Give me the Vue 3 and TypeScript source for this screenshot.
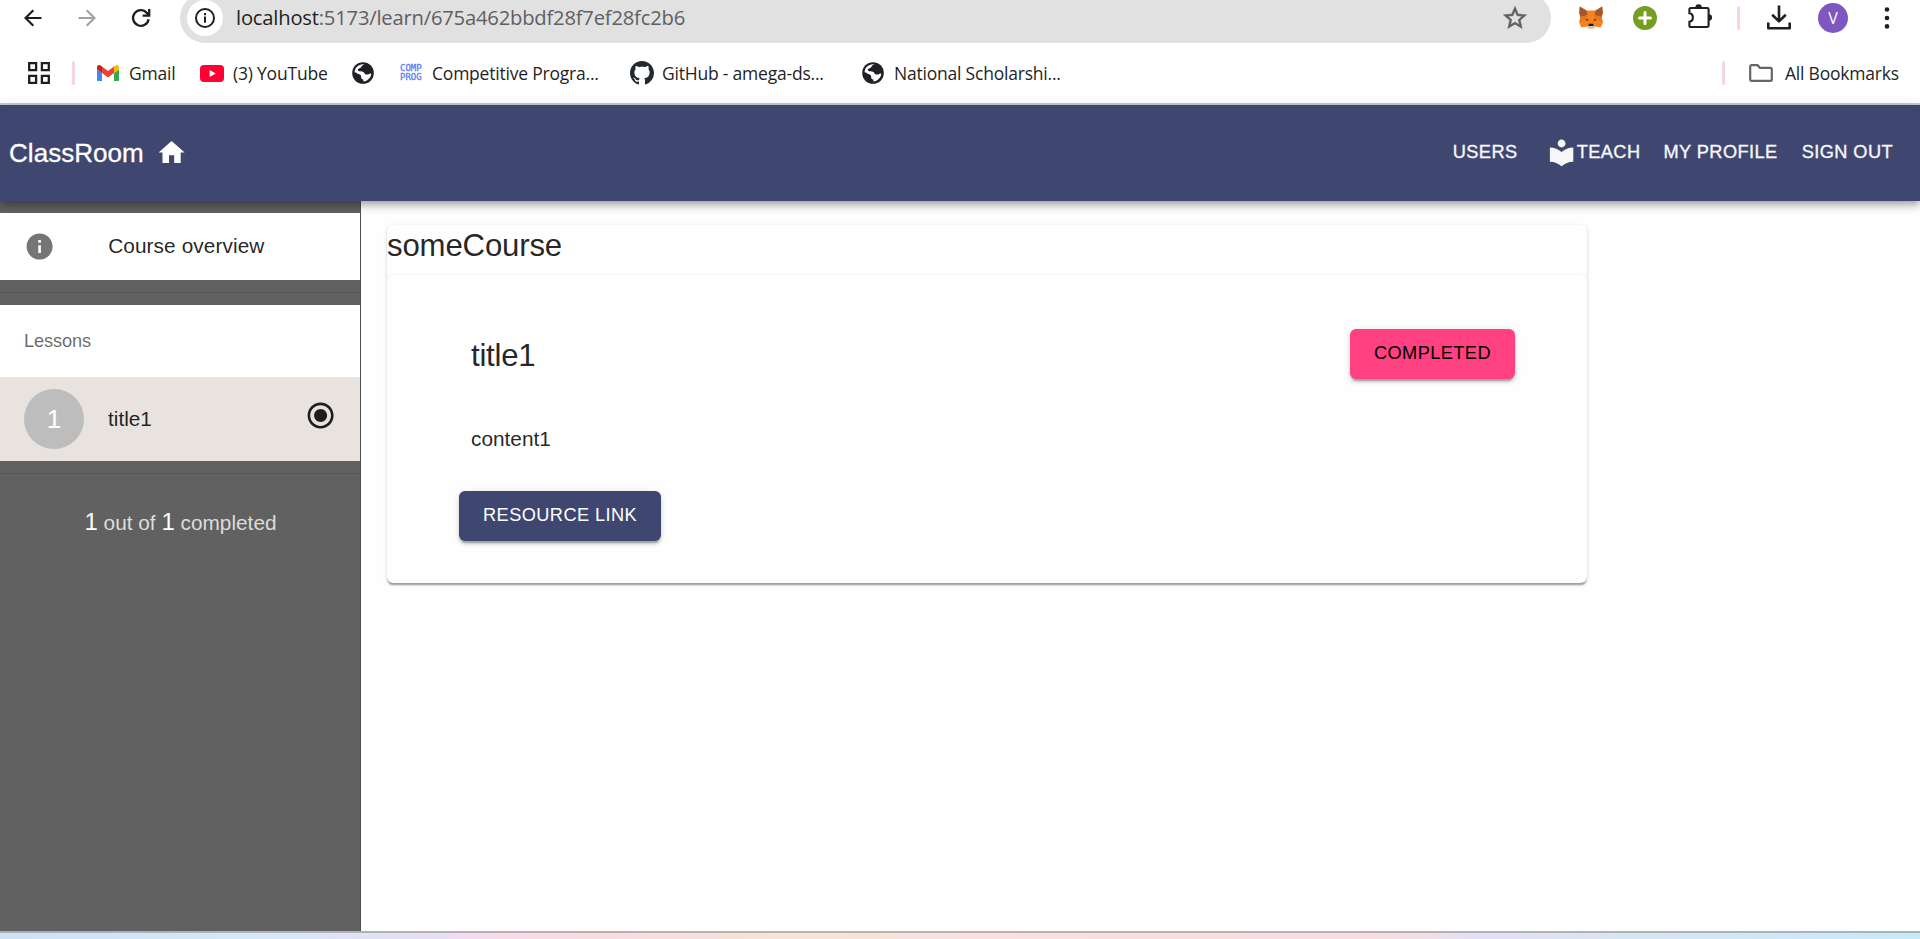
<script setup lang="ts">
import { ref, computed } from 'vue'

interface Lesson {
  title: string
  content: string
  done: boolean
}

const courseName = ref('someCourse')
const lessons = ref<Lesson[]>([{ title: 'title1', content: 'content1', done: true }])
const current = ref(0)
const active = computed(() => lessons.value[current.value])
const completed = computed(() => lessons.value.filter((l) => l.done).length)
</script>

<template>
  <div class="screen">
    <header class="browser">
      <div class="toolbar">
        <svg class="ic back" viewBox="0 0 18 18" width="18" height="18"><path d="M17.5 9H1.8M9.3 1.2 1.5 9l7.8 7.8" fill="none" stroke="#1f1f1f" stroke-width="2.2" /></svg>
        <svg class="ic forward" viewBox="0 0 18 18" width="18" height="18"><path d="M.5 9h15.7M8.7 1.2 16.5 9l-7.8 7.8" fill="none" stroke="#a3a3a3" stroke-width="2.2" /></svg>
        <svg class="ic reload" viewBox="0 0 20 20" width="20" height="20"><path d="M17.6 11.2A7.8 7.8 0 1 1 15.8 4.9L18 7M18.2 1v6.6h-6.6" fill="none" stroke="#1f1f1f" stroke-width="2.3" /></svg>
        <div class="omnibox">
          <span class="site">
            <svg viewBox="0 0 22 22" width="22" height="22"><circle cx="11" cy="11" r="9" fill="none" stroke="#1f1f1f" stroke-width="2" /><path d="M11 9.6v6.2M11 6v2.2" stroke="#1f1f1f" stroke-width="2" /></svg>
          </span>
          <span class="url"><b>localhost</b>:5173/learn/675a462bbdf28f7ef28fc2b6</span>
          <svg class="star" viewBox="0 0 24 24" width="28" height="28"><path fill="#5f6062" stroke="#5f6062" stroke-width=".4" d="M22 9.24l-7.19-.62L12 2 9.19 8.63 2 9.24l5.46 4.73L5.82 21 12 17.27 18.18 21l-1.63-7.03L22 9.24zM12 15.4l-3.76 2.27 1-4.28-3.32-2.88 4.38-.38L12 6.1l1.71 4.04 4.38.38-3.32 2.88 1 4.28L12 15.4z" /></svg>
        </div>
        <svg class="ic fox" viewBox="0 0 24 23" width="24" height="23">
          <path d="M.8.5 7.400 4.400h9.200L23.2.5 24 7l-1.400 4.300L24 16l-2.200 5.600-5.300-1.200-2.200 2.100H9.700l-2.200-2.100-5.300 1.200L0 16l1.400-4.700L0 7z" fill="#f5841f" />
          <path d="M.8.5 7.400 4.400 8.600 9 1.400 11 .3 6.600zM23.2.5 16.600 4.400 15.400 9l7.200 2 1.100-4.400z" fill="#a5562a" />
          <path d="M1.400 11.300 8.600 9l-.4 3.400L1 16zM22.600 11.300 15.400 9l.4 3.400L23 16z" fill="#e9761c" />
          <path d="m5.800 14 3-1.200.7 2.200zM18.200 14l-3-1.200-.7 2.200z" fill="#4a3a3b" />
          <path d="m8 20.400 1.700-1.500h4.600l1.700 1.500-1.700 2.100H9.700z" fill="#d6c4b4" /><path d="M9.800 17.800h4.400l.5 2.200H9.300z" fill="#241d1c" />
        </svg>
        <svg class="ic plus" viewBox="0 0 24 24" width="24" height="24"><circle cx="12" cy="12" r="12" fill="#759e22" /><path d="M12 6.500v11M6.500 12h11" stroke="#fff" stroke-width="3" stroke-linecap="round" /></svg>
        <svg class="ic puzzle" viewBox="0 0 24 26" width="24" height="26"><path d="M3 5h16.2a1.4 1.4 0 0 1 1.4 1.4v16.2a1.4 1.4 0 0 1-1.4 1.4H2.6a1.2 1.2 0 0 1-1.2-1.2v-4.1c4.600-.4 4.600-8 0-8.4V6.400A1.4 1.4 0 0 1 3 5z" fill="none" stroke="#1f1f1f" stroke-width="2.1" /><path d="M7.4 4.4a3.2 3.2 0 0 1 6.4 0zM20.8 11.2a3.2 3.2 0 0 1 0 6.4z" fill="#1f1f1f" /></svg>
        <i class="rule toolrule"></i>
        <svg class="ic download" viewBox="0 0 24 25" width="24" height="25"><path d="M12 .5v15.6M5.2 9.8 12 16.4l6.8-6.6M1.3 17.5v5.7h21.4v-5.7" fill="none" stroke="#1f1f1f" stroke-width="2.6" stroke-linejoin="round" /></svg>
        <span class="profile">V</span>
        <svg class="ic dots" viewBox="0 0 6 24" width="6" height="24"><g fill="#1f1f1f"><circle cx="3" cy="3.5" r="2.3" /><circle cx="3" cy="12" r="2.3" /><circle cx="3" cy="20.4" r="2.3" /></g></svg>
      </div>

      <div class="bookmarks">
        <svg class="ic apps" viewBox="0 0 22 22" width="22" height="22"><path d="M1.2 1.2h6.9v6.9H1.2zM13.9 1.2h6.9v6.9h-6.9zM1.2 13.9h6.9v6.9H1.2zM13.9 13.9h6.9v6.9h-6.9z" fill="none" stroke="#1f1f1f" stroke-width="2.3" /></svg>
        <i class="rule bmrule"></i>
        <svg class="ic gmail" viewBox="52 42 88 66" width="22" height="16.5"><path fill="#4285f4" d="M58 108h14V74L52 59v43c0 3.32 2.69 6 6 6" /><path fill="#34a853" d="M120 108h14c3.32 0 6-2.69 6-6V59l-20 15" /><path fill="#fbbc04" d="M120 48v26l20-15v-8c0-7.42-8.47-11.65-14.4-7.2" /><path fill="#ea4335" d="M72 74V48l24 18 24-18v26L96 92" /><path fill="#c5221f" d="M52 51v8l20 15V48l-5.6-4.2c-5.94-4.45-14.4-.22-14.4 7.2" /></svg>
        <span class="bm t-gmail">Gmail</span>
        <svg class="ic youtube" viewBox="0 0 24 17" width="24" height="17"><rect width="24" height="17" rx="4" fill="#ff0033" /><path d="m9.6 4.9 6.2 3.6-6.2 3.6z" fill="#fff" /></svg>
        <span class="bm t-youtube">(3) YouTube</span>
        <svg class="ic globe1" viewBox="0 0 22 22" width="22" height="22"><circle cx="11" cy="11" r="10.8" fill="#1f2023" /><path d="M12.6 2.4c-3.2.6-2.6 2.2-4 3.3-1.500 1.100-2.800.6-2.800 2.400 0 1.500 2.200 1.300 4.200 1.400 2.300.1 2.100 2.400 3.900 2.900 1.400.4 2.300.2 3.200-.4.9-.6 1.900-.6 2.200-.6-.3 4-3.500 7.600-7.900 8.100v-2c-1.500.1-2.200-1-2.200-2.300 0-1.700-.9-2.600-2.600-3.100-1.500-.4-2.300-1.600-4-1.800C2.600 5.500 7 1.500 12.600 2.400z" fill="#fff" /><path d="M14 2.800c.9 1.400-.2 2.300-1.500 2.600-1 .3-.7 1.500.5 1.900 1 .3.8 1.700 2 2.100 1.500.4 3-.8 4.300-.5l.3 3 1.200-1-.5-4.500z" fill="#1f2023" /></svg>
        <span class="comp">COMP<br />PROG</span>
        <span class="bm t-comp">Competitive Progra...</span>
        <svg class="ic github" viewBox="0 0 16 16" width="24" height="24"><path fill="#24292f" d="M8 0C3.58 0 0 3.58 0 8c0 3.54 2.29 6.53 5.47 7.59.4.07.55-.17.55-.38 0-.19-.01-.82-.01-1.49-2.01.37-2.53-.49-2.69-.94-.09-.23-.48-.94-.82-1.13-.28-.15-.68-.52-.01-.53.63-.01 1.08.58 1.23.82.72 1.21 1.87.87 2.33.66.07-.52.28-.87.51-1.07-1.78-.2-3.64-.89-3.64-3.95 0-.87.31-1.59.82-2.15-.08-.2-.36-1.02.08-2.12 0 0 .67-.21 2.2.82.64-.18 1.32-.27 2-.27s1.36.09 2 .27c1.53-1.04 2.2-.82 2.2-.82.44 1.1.16 1.92.08 2.12.51.56.82 1.27.82 2.15 0 3.07-1.87 3.75-3.65 3.95.29.25.54.73.54 1.48 0 1.07-.01 1.93-.01 2.2 0 .21.15.46.55.38A8.01 8.01 0 0 0 16 8c0-4.42-3.58-8-8-8z" /></svg>
        <span class="bm t-github">GitHub - amega-ds...</span>
        <svg class="ic globe2" viewBox="0 0 22 22" width="22" height="22"><circle cx="11" cy="11" r="10.8" fill="#1f2023" /><path d="M12.6 2.4c-3.2.6-2.6 2.2-4 3.3-1.500 1.100-2.800.6-2.800 2.400 0 1.500 2.200 1.300 4.200 1.400 2.300.1 2.100 2.400 3.900 2.900 1.400.4 2.300.2 3.200-.4.9-.6 1.900-.6 2.200-.6-.3 4-3.500 7.600-7.900 8.100v-2c-1.500.1-2.200-1-2.200-2.300 0-1.700-.9-2.600-2.600-3.100-1.500-.4-2.300-1.600-4-1.800C2.600 5.500 7 1.500 12.600 2.400z" fill="#fff" /><path d="M14 2.800c.9 1.400-.2 2.300-1.500 2.600-1 .3-.7 1.500.5 1.900 1 .3.8 1.700 2 2.100 1.500.4 3-.8 4.300-.5l.3 3 1.200-1-.5-4.500z" fill="#1f2023" /></svg>
        <span class="bm t-national">National Scholarshi...</span>
        <div class="all">
          <i class="rule"></i>
          <svg class="ic folder" viewBox="0 0 24 18" width="24" height="18"><path d="M2.4 1.200h6.100l2.400 2.600h10.500a1.400 1.400 0 0 1 1.400 1.400v10.200a1.400 1.400 0 0 1-1.400 1.400h-19A1.400 1.400 0 0 1 1.200 15.400V2.500a1.300 1.300 0 0 1 1.200-1.300z" fill="none" stroke="#666" stroke-width="2.2" /></svg>
          <span class="bm t-all">All Bookmarks</span>
        </div>
      </div>
    </header>

    <nav class="appbar">
      <span class="brand">ClassRoom</span>
      <svg class="mi home" viewBox="0 0 24 24"><path d="M10 20v-6h4v6h5v-8h3L12 3 2 12h3v8z" /></svg>
      <div class="links">
        <a class="link users">USERS</a>
        <a class="link teach"><svg class="mi" viewBox="0 0 24 24"><path d="M12 11.550C9.640 9.350 6.480 8 3 8v11c3.480 0 6.640 1.350 9 3.550 2.360-2.190 5.520-3.550 9-3.550V8c-3.480 0-6.640 1.350-9 3.550zM12 8c1.660 0 3-1.340 3-3s-1.340-3-3-3-3 1.340-3 3 1.340 3 3 3z" /></svg>TEACH</a>
        <a class="link my">MY PROFILE</a>
        <a class="link">SIGN OUT</a>
      </div>
    </nav>

    <div class="body">
      <aside class="drawer">
        <div class="list">
          <div class="item overview">
            <svg class="mi info" viewBox="0 0 24 24"><path d="M12 2C6.480 2 2 6.480 2 12s4.480 10 10 10 10-4.480 10-10S17.520 2 12 2zm1 15h-2v-6h2v6zm0-8h-2V7h2v2z" /></svg>
            <span class="label">Course overview</span>
          </div>
        </div>
        <div class="list bordered">
          <div class="subheader">Lessons</div>
          <div v-for="(lesson, i) in lessons" :key="i" class="item lesson" @click="current = i">
            <span class="avatar">{{ i + 1 }}</span>
            <span class="name">{{ lesson.title }}</span>
            <svg class="mi state" viewBox="0 0 24 24"><path v-if="lesson.done" d="M12 7c-2.760 0-5 2.240-5 5s2.240 5 5 5 5-2.240 5-5-2.240-5-5-5zm0-5C6.480 2 2 6.480 2 12s4.480 10 10 10 10-4.480 10-10S17.520 2 12 2zm0 18c-4.420 0-8-3.580-8-8s3.580-8 8-8 8 3.580 8 8-3.580 8-8 8z" /><path v-else d="M12 2C6.480 2 2 6.480 2 12s4.480 10 10 10 10-4.480 10-10S17.520 2 12 2zm0 18c-4.420 0-8-3.580-8-8s3.580-8 8-8 8 3.580 8 8-3.580 8-8 8z" /></svg>
          </div>
        </div>
        <p class="progress"><em>{{ completed }}</em> out of <em>{{ lessons.length }}</em> completed</p>
      </aside>

      <main class="content">
        <section class="card">
          <h1 class="course">{{ courseName }}</h1>
          <article class="card inner">
            <div class="head">
              <h2>{{ active.title }}</h2>
              <button class="btn pink">COMPLETED</button>
            </div>
            <p class="text">{{ active.content }}</p>
            <button class="btn blue">RESOURCE LINK</button>
          </article>
        </section>
      </main>
    </div>

    <footer class="desktop"></footer>
  </div>
</template>

<style>
html,
body {
  margin: 0;
  overflow: hidden;
}
</style>

<style scoped>
.screen {
  width: 1920px;
  height: 939px;
  display: flex;
  flex-direction: column;
  overflow: hidden;
  background: #fefefe;
  color: rgba(0, 0, 0, 0.87);
  font-family: 'Liberation Sans', Arial, sans-serif;
  font-size: 20.8px;
}
.ic,
.mi {
  display: block;
  flex: none;
}
.mi {
  width: 31.2px;
  height: 31.2px;
  fill: currentColor;
}

/* browser chrome */
.browser {
  flex: none;
  height: 103px;
  overflow: hidden;
  border-bottom: 2px solid #c9c9cb;
  background: #fff;
  color: #1f1f1f;
  font-family: 'Open Sans', 'Noto Sans', sans-serif;
}
.toolbar {
  display: flex;
  align-items: center;
  height: 35px;
}
.back { margin-left: 24px; }
.forward { margin-left: 36px; }
.reload { margin-left: 35px; }
.omnibox {
  flex: none;
  display: flex;
  align-items: center;
  box-sizing: border-box;
  width: 1371px;
  height: 50px;
  margin-left: 29px;
  padding: 0 22px 0 7px;
  border-radius: 25px;
  background: #e1e1e1;
}
.site {
  display: flex;
  align-items: center;
  justify-content: center;
  width: 36px;
  height: 36px;
  border-radius: 50%;
  background: #fff;
}
.url {
  margin-left: 13px;
  padding-bottom: 2px;
  color: #5f6062;
  font-size: 20.2px;
  letter-spacing: -0.2px;
  white-space: nowrap;
}
.url b {
  color: #1f1f1f;
  font-weight: 400;
}
.star { margin-left: auto; }
.fox { margin-left: 28px; }
.plus { margin-left: 30px; }
.puzzle { margin: -3px 0 0 31px; }
.rule {
  flex: none;
  width: 3px;
  height: 24px;
  border-radius: 2px;
  background: #f8d5e4;
}
.toolrule { margin-left: 25px; }
.download { margin-left: 27px; }
.profile {
  width: 30px;
  height: 30px;
  margin-left: 27px;
  border-radius: 50%;
  background: #7e57c2;
  color: #fff;
  font-size: 16px;
  line-height: 30px;
  text-align: center;
}
.dots { margin-left: 36px; }
.bookmarks {
  display: flex;
  align-items: center;
  height: 60px;
  margin-top: 8px;
}
.bm {
  flex: none;
  padding-bottom: 1px;
  font-size: 17.5px;
  letter-spacing: -0.21px;
  line-height: 24px;
  white-space: nowrap;
}
.apps { margin-left: 28px; }
.bmrule { margin-left: 22px; }
.gmail { margin-left: 22px; }
.t-gmail { width: 61px; margin-left: 10px; }
.youtube { margin-left: 10px; }
.t-youtube { width: 108px; margin-left: 9px; }
.globe1 { margin-left: 11px; }
.comp {
  width: 22px;
  margin-left: 26px;
  color: #5b7cf5;
  font-family: 'DejaVu Sans Mono', monospace;
  font-size: 9px;
  line-height: 9px;
  -webkit-text-stroke: 0.3px #5b7cf5;
}
.t-comp { width: 188px; margin-left: 10px; }
.github { margin-left: 10px; }
.t-github { width: 190px; margin-left: 8px; }
.globe2 { margin-left: 10px; }
.t-national { margin-left: 10px; }
.all {
  display: flex;
  align-items: center;
  width: 198px;
  margin-left: auto;
}
.folder { margin-left: 24px; }
.t-all { margin-left: 12px; }

/* application bar */
.appbar {
  position: relative;
  z-index: 2;
  flex: none;
  display: flex;
  align-items: center;
  box-sizing: border-box;
  height: 96px;
  padding: 0 15px 0 9px;
  background: #3f4771;
  color: #fff;
  box-shadow: 0 3px 6px -1.5px rgba(0, 0, 0, 0.2), 0 6px 7.5px 0 rgba(0, 0, 0, 0.14), 0 1.5px 15px 0 rgba(0, 0, 0, 0.12);
}
.brand {
  font-size: 26px;
  letter-spacing: 0.05px;
  -webkit-text-stroke: 0.3px currentColor;
}
.home { margin-left: 12px; }
.links {
  display: flex;
  margin-left: auto;
}
.link {
  display: flex;
  align-items: center;
  padding: 0 12px;
  font-size: 18.2px;
  letter-spacing: 0.43px;
  line-height: 31.85px;
  color: #f7f7fa;
  -webkit-text-stroke: 0.35px currentColor;
}
.users { margin-right: 4px; }
.teach { margin-right: -1px; }

/* lesson drawer */
.body {
  flex: 1;
  display: flex;
  min-height: 0;
}
.drawer {
  width: 360px;
  flex: none;
  border-right: 1px solid #4f4f4f;
  background: #616161;
}
.list {
  padding: 12px 0;
  border-bottom: 1px solid #555;
}
.item {
  display: flex;
  align-items: center;
  background: #fff;
}
.overview {
  height: 67px;
  padding-left: 24px;
}
.label {
  padding-bottom: 1px;
  letter-spacing: 0.09px;
}
.info {
  margin-right: 53px;
  color: #757575;
}
.subheader {
  height: 72px;
  padding-left: 24px;
  background: #fff;
  color: rgba(0, 0, 0, 0.6);
  font-size: 18.2px;
  letter-spacing: -0.12px;
  line-height: 72px;
}
.lesson {
  height: 84px;
  padding: 0 24px;
  background: #e8e3df;
}
.avatar {
  width: 60px;
  height: 60px;
  border-radius: 50%;
  background: #bdbdbd;
  color: #fff;
  font-size: 26px;
  line-height: 60px;
  text-align: center;
}
.name { margin-left: 24px; }
.state {
  margin: -6px 0 0 auto;
}
.progress {
  margin: 32px 0 0 1px;
  color: #dcdcdc;
  line-height: 31px;
  text-align: center;
}
.progress em {
  color: #fff;
  font-size: 24px;
  font-style: normal;
}

/* course content */
.content {
  padding: 24px 0 0 26px;
}
.card {
  width: 1200px;
  height: 358px;
  overflow: hidden;
  border-radius: 6px;
  background: #fefefe;
  box-shadow: 0 3px 1.5px -1.5px rgba(0, 0, 0, 0.2), 0 1.5px 1.5px 0 rgba(0, 0, 0, 0.14), 0 1.5px 4.5px 0 rgba(0, 0, 0, 0.12);
}
.course {
  height: 50px;
  margin: 0;
  font-size: 31.2px;
  font-weight: 400;
  letter-spacing: -0.18px;
  line-height: 41.6px;
}
.inner {
  box-sizing: border-box;
  height: 308px;
  padding: 54px 72px 0;
}
.head {
  display: flex;
  justify-content: space-between;
  height: 50px;
  padding-left: 12px;
}
.head h2 {
  margin: 6px 0 0;
  font-size: 31.2px;
  font-weight: 400;
  letter-spacing: -0.25px;
  line-height: 41.6px;
}
.text {
  margin: 44px 0 37px 12px;
  line-height: 31px;
}
.btn {
  height: 50px;
  padding: 0 24px 2px;
  border: 0;
  border-radius: 6px;
  font-family: inherit;
  font-size: 18.2px;
  letter-spacing: 0.43px;
  box-shadow: 0 4.5px 1.5px -3px rgba(0, 0, 0, 0.2), 0 3px 3px 0 rgba(0, 0, 0, 0.14), 0 1.5px 7.5px 0 rgba(0, 0, 0, 0.12);
}
.pink {
  background: #ff4081;
  color: #000;
}
.blue {
  background: #3f4771;
  color: #fff;
}

/* desktop strip under the window */
.desktop {
  flex: none;
  box-sizing: border-box;
  height: 8px;
  border-top: 2px solid rgba(0, 0, 0, 0.22);
  background: linear-gradient(90deg, #d2e0f5 0, #d8e8f4 250px, #e6dff2 430px, #f4dcf0 475px, #f5dde4 550px, #f6e3da 780px, #f7e2e0 960px, #f6dfe0 1380px, #e5e0f4 1480px, #dbe5f0 1600px, #c9e9f9 1920px) border-box;
}
</style>
